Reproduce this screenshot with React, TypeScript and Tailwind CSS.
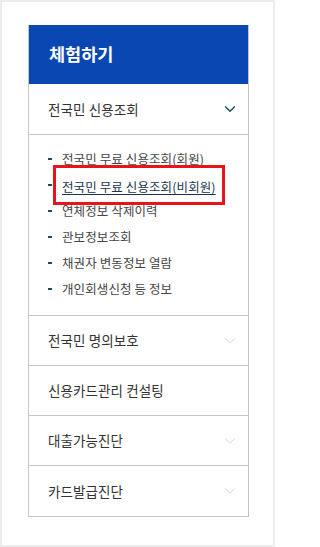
import { ChevronDown } from "lucide-react";

const subItems = [
  { label: "전국민 무료 신용조회(회원)" },
  { label: "전국민 무료 신용조회(비회원)", marked: true },
  { label: "연체정보 삭제이력" },
  { label: "관보정보조회" },
  { label: "채권자 변동정보 열람" },
  { label: "개인회생신청 등 정보" },
];

const rows = [
  { label: "전국민 명의보호", chevron: true },
  { label: "신용카드관리 컨설팅", chevron: false },
  { label: "대출가능진단", chevron: true },
  { label: "카드발급진단", chevron: true, last: true },
];

export default function App() {
  return (
    <div
      className="h-[547px] w-[275px] border-2 border-[#ececec] bg-white pl-[26px] pt-[23px]"
      style={{ fontFamily: '"Noto Sans CJK KR", "Noto Sans", sans-serif' }}
    >
      <div className="w-[221px] border border-t-0 border-[#c6c6c6]">
        <div className="flex h-[59px] items-center bg-[#0a47b3] pl-[20px]">
          <h2 className="text-[17.5px] font-bold text-white">체험하기</h2>
        </div>

        <div className="flex h-[51px] items-center justify-between border-b border-[#c6c6c6] pl-[19px] pr-[9px]">
          <span className="text-[13.5px] tracking-[0.1px] text-[#333]">전국민 신용조회</span>
          <ChevronDown className="h-[18px] w-[18px] text-[#1d4a5c]" strokeWidth={1.8} />
        </div>

        <ul className="border-b border-[#c6c6c6] pb-[13px] pl-[19px] pt-[11px]">
          {subItems.map((item) => (
            <li key={item.label} className="flex h-[26px] items-center gap-[10px]">
              <span className="h-[2px] w-[4px] bg-[#1d4a5c]" />
              {item.marked ? (
                <span className="relative">
                  <span className="text-[12.5px] tracking-[0.1px] text-[#1b3550] underline underline-offset-2">
                    {item.label}
                  </span>
                  <span className="absolute -bottom-[8px] -left-[9px] -right-[9px] -top-[8px] border-[3px] border-[#e8141c]" />
                </span>
              ) : (
                <span className="text-[12.5px] tracking-[0.1px] text-[#444]">{item.label}</span>
              )}
            </li>
          ))}
        </ul>

        {rows.map((row) => (
          <div
            key={row.label}
            className={`flex h-[50px] items-center justify-between pl-[19px] pr-[9px] ${
              row.last ? "" : "border-b border-[#c6c6c6]"
            }`}
          >
            <span className="text-[13.5px] tracking-[0.1px] text-[#333]">{row.label}</span>
            {row.chevron && <ChevronDown className="h-[18px] w-[18px] text-[#d2d2d2]" strokeWidth={1.3} />}
          </div>
        ))}
      </div>
    </div>
  );
}
